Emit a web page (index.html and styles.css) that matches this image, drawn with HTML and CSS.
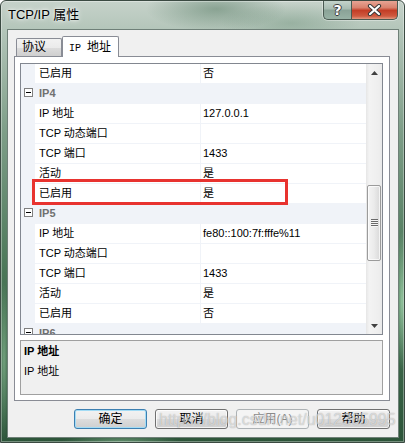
FILE: index.html
```html
<!DOCTYPE html>
<html>
<head>
<meta charset="utf-8">
<title>TCP/IP 属性</title>
<link rel="stylesheet" href="styles.css">
</head>
<body>
<div class="window">
  <div class="titlebar">
    <div class="title">TCP/IP 属性</div>
    <div class="caption">
      <div class="cbtn help"><span>?</span></div>
      <div class="cbtn close">
        <svg width="15" height="12" viewBox="0 0 15 12">
          <path d="M3 2 L12 10 M12 2 L3 10" stroke="#3a3a3a" stroke-width="4.2" stroke-linecap="round" fill="none"/>
          <path d="M3 2 L12 10 M12 2 L3 10" stroke="#ffffff" stroke-width="2.2" stroke-linecap="round" fill="none"/>
        </svg>
      </div>
    </div>
  </div>
  <div class="client">
    <div class="tabs">
      <div class="tab">协议</div>
      <div class="tab active"><span class="mono">IP&nbsp;</span>地址</div>
    </div>
    <div class="panel">
      <div class="grid">
        <div class="rows">
          <div class="row"><div class="m"></div><div class="n">已启用</div><div class="v">否</div></div>
          <div class="row cat"><div class="minus"></div><div class="c">IP4</div></div>
          <div class="row"><div class="m"></div><div class="n">IP 地址</div><div class="v">127.0.0.1</div></div>
          <div class="row"><div class="m"></div><div class="n">TCP 动态端口</div><div class="v"></div></div>
          <div class="row"><div class="m"></div><div class="n">TCP 端口</div><div class="v">1433</div></div>
          <div class="row"><div class="m"></div><div class="n">活动</div><div class="v">是</div></div>
          <div class="row"><div class="m"></div><div class="n">已启用</div><div class="v">是</div></div>
          <div class="row cat"><div class="minus"></div><div class="c">IP5</div></div>
          <div class="row"><div class="m"></div><div class="n">IP 地址</div><div class="v">fe80::100:7f:fffe%11</div></div>
          <div class="row"><div class="m"></div><div class="n">TCP 动态端口</div><div class="v"></div></div>
          <div class="row"><div class="m"></div><div class="n">TCP 端口</div><div class="v">1433</div></div>
          <div class="row"><div class="m"></div><div class="n">活动</div><div class="v">是</div></div>
          <div class="row"><div class="m"></div><div class="n">已启用</div><div class="v">否</div></div>
          <div class="row cat"><div class="minus"></div><div class="c">IP6</div></div>
          <div class="mark"></div>
        </div>
        <div class="vscroll">
          <div class="arrow">
            <svg width="7" height="4" viewBox="0 0 7 4"><polygon points="3.5,0 7,4 0,4" fill="#404040"/></svg>
          </div>
          <div class="track">
            <div class="thumb"><div class="grip"></div></div>
          </div>
          <div class="arrow">
            <svg width="7" height="4" viewBox="0 0 7 4"><polygon points="0,0 7,0 3.5,4" fill="#404040"/></svg>
          </div>
        </div>
      </div>
      <div class="desc">
        <div class="desc-title">IP 地址</div>
        <div class="desc-text">IP 地址</div>
      </div>
    </div>
    <div class="buttons">
      <button class="btn default">确定</button>
      <button class="btn">取消</button>
      <button class="btn" disabled>应用(A)</button>
      <button class="btn">帮助</button>
    </div>
  </div>
  <div class="watermark">https://blog.csdn.net/u012365995</div>
</div>
</body>
</html>
```

FILE: styles.css
```css
* { box-sizing: border-box; }
html, body { margin: 0; padding: 0; background: #ffffff; }
body {
  font-family: "Liberation Sans", "Noto Sans CJK SC", sans-serif;
  font-size: 11px;
  color: #000;
}

.window {
  position: relative;
  width: 405px;
  height: 443px;
  display: flex;
  flex-direction: column;
  border: 1px solid #3b4a42;
  border-radius: 6px 6px 0 0;
  overflow: hidden;
  box-shadow: inset 0 0 0 1px rgba(255,255,255,0.35);
  background:
    radial-gradient(70px 22px at 215px 8px, rgba(70,110,85,0.45), rgba(70,110,85,0) 100%),
    radial-gradient(70px 20px at 290px 22px, rgba(95,135,110,0.35), rgba(95,135,110,0) 100%),
    radial-gradient(6px 70px at 401px 300px, rgba(160,210,170,0.85), rgba(160,210,170,0) 100%),
    radial-gradient(5px 80px at 3px 360px, rgba(150,200,160,0.6), rgba(150,200,160,0) 100%),
    radial-gradient(60px 8px at 120px 441px, rgba(150,200,160,0.5), rgba(150,200,160,0) 100%),
    linear-gradient(to bottom, #c6d2ca 0px, #b3c5b9 30px, #7e9e88 130px, #4b7758 270px, #2c5439 443px);
}

/* title bar */
.titlebar {
  height: 28px;
  display: flex;
  justify-content: space-between;
  align-items: flex-start;
}
.title {
  padding: 6px 0 0 7px;
  font-size: 13px;
  line-height: 16px;
  color: #000;
  text-shadow: 0 0 6px rgba(255,255,255,0.95), 0 0 3px rgba(255,255,255,0.9);
}
.caption {
  display: flex;
  margin-right: 6px;
  margin-top: -1px;
  box-shadow: 0 0 0 1px rgba(255,255,255,0.35);
  border-radius: 0 0 5px 5px;
}
.cbtn {
  height: 20px;
  display: flex;
  align-items: center;
  justify-content: center;
  border: 1px solid #4a5a52;
  border-top: none;
}
.help {
  width: 28px;
  border-right: none;
  border-radius: 0 0 0 5px;
  background: linear-gradient(to bottom, #c8d6cf 0%, #a9bdb3 45%, #8aa397 55%, #98b2a5 100%);
}
.help span {
  font-family: "DejaVu Sans", sans-serif;
  font-weight: bold;
  font-size: 14px;
  line-height: 14px;
  color: #fff;
  text-shadow: 1px 0 0 #3a3a3a, -1px 0 0 #3a3a3a, 0 1px 0 #3a3a3a, 0 -1px 0 #3a3a3a;
}
.close {
  width: 47px;
  border-radius: 0 0 5px 0;
  background: linear-gradient(to bottom, #e9a99a 0%, #d9826e 40%, #c33d26 55%, #cf5a40 85%, #e39a82 100%);
}

/* client area */
.client {
  flex: 1;
  margin: 0 5px 4px 6px;
  border: 1px solid #6f8078;
  background: #f0f0f0;
  padding: 6px 8px 8px 6px;
  display: flex;
  flex-direction: column;
}

.tabs {
  display: flex;
  align-items: flex-end;
  height: 20px;
  padding-left: 2px;
  position: relative;
  z-index: 1;
}
.tab {
  width: 46px;
  height: 18px;
  padding-left: 5px;
  border: 1px solid #898c95;
  border-bottom: none;
  border-radius: 2px 2px 0 0;
  background: linear-gradient(to bottom, #f2f2f2 0%, #ebebeb 50%, #dddddd 51%, #cfcfcf 100%);
  font-size: 12px;
  line-height: 17px;
  white-space: nowrap;
}
.tab.active {
  width: 57px;
  height: 21px;
  margin-bottom: -1px;
  padding-left: 6px;
  background: #ffffff;
  line-height: 20px;
}
.mono {
  font-family: "Liberation Mono", monospace;
  font-size: 10px;
}

.panel {
  width: 376px;
  height: 345px;
  border: 1px solid #898c95;
  background: #ffffff;
  padding: 6px 6px 5px 5px;
  display: flex;
  flex-direction: column;
}

/* property grid */
.grid {
  width: 363px;
  height: 272px;
  border: 1px solid #828790;
  display: flex;
  overflow: hidden;
}
.rows {
  flex: 1;
  position: relative;
  overflow: hidden;
  background: #ffffff;
}
.row {
  height: 20px;
  display: flex;
  border-bottom: 1px solid #f0f3f8;
  white-space: nowrap;
}
.row .m {
  width: 14px;
  background: #f0f3f8;
}
.row .n {
  width: 165px;
  padding-left: 4px;
  line-height: 19px;
}
.row .v {
  flex: 1;
  border-left: 1px solid #f0f3f8;
  padding-left: 2px;
  line-height: 19px;
}
.row.cat {
  background: #f0f3f8;
}
.minus {
  width: 9px;
  height: 9px;
  margin: 4px 0 0 3px;
  border: 1px solid #808080;
  background: #fff;
  position: relative;
}
.minus::after {
  content: "";
  position: absolute;
  left: 1px;
  top: 3px;
  width: 5px;
  height: 1px;
  background: #000;
}
.row.cat .c {
  padding-left: 6px;
  line-height: 19px;
  font-weight: bold;
  color: #707070;
}
.mark {
  position: absolute;
  left: 11px;
  top: 115px;
  width: 256px;
  height: 26px;
  border: 3px solid #e8332f;
}

/* scrollbar */
.vscroll {
  width: 16px;
  display: flex;
  flex-direction: column;
  background: linear-gradient(to right, #e6e6e6 0%, #f3f3f3 20%, #eeeeee 80%, #e9e9e9 100%);
}
.arrow {
  height: 17px;
  display: flex;
  align-items: center;
  justify-content: center;
}
.track {
  flex: 1;
  padding: 104px 1px 0 1px;
}
.thumb {
  height: 76px;
  border: 1px solid #9b9b9b;
  border-radius: 2px;
  background: linear-gradient(to right, #f4f4f4 0%, #ebebeb 50%, #d9d9d9 100%);
  box-shadow: inset 0 0 0 1px rgba(255,255,255,0.7);
  display: flex;
  align-items: center;
  justify-content: center;
}
.grip {
  width: 7px;
  height: 8px;
  background: repeating-linear-gradient(to bottom, #6a6a6a 0px, #6a6a6a 1px, #f6f6f6 1px, #f6f6f6 2px);
}

/* description */
.desc {
  height: 55px;
  margin-top: 5px;
  border: 1px solid #a0a0a0;
  background: #f0f0f0;
  padding-left: 3px;
  line-height: 20px;
}
.desc-title { font-weight: bold; }

/* buttons */
.buttons {
  display: flex;
  justify-content: flex-end;
  gap: 8px;
  margin-top: 8px;
}
.btn {
  width: 73px;
  height: 20px;
  padding: 0;
  font-family: "Liberation Sans", "Noto Sans CJK SC", sans-serif;
  font-size: 12px;
  line-height: 18px;
  color: #000;
  border: 1px solid #707070;
  border-radius: 3px;
  background: linear-gradient(to bottom, #f2f2f2 0%, #ebebeb 50%, #dddddd 51%, #cfcfcf 100%);
  box-shadow: inset 0 0 0 1px rgba(255,255,255,0.75);
}
.btn.default {
  border-color: #3c7fb1;
  box-shadow: inset 0 0 0 1px #a3dcf5;
}
.btn:disabled {
  border-color: #adb2b5;
  background: #f4f4f4;
  color: #8a8a8a;
  box-shadow: none;
}

.watermark {
  position: absolute;
  left: 158px;
  top: 409px;
  font-family: "Liberation Sans", sans-serif;
  font-size: 16px;
  line-height: 20px;
  color: rgba(255,255,255,0.55);
  text-shadow: 0 0 1px rgba(90,90,90,0.55);
  white-space: nowrap;
  pointer-events: none;
}
```
